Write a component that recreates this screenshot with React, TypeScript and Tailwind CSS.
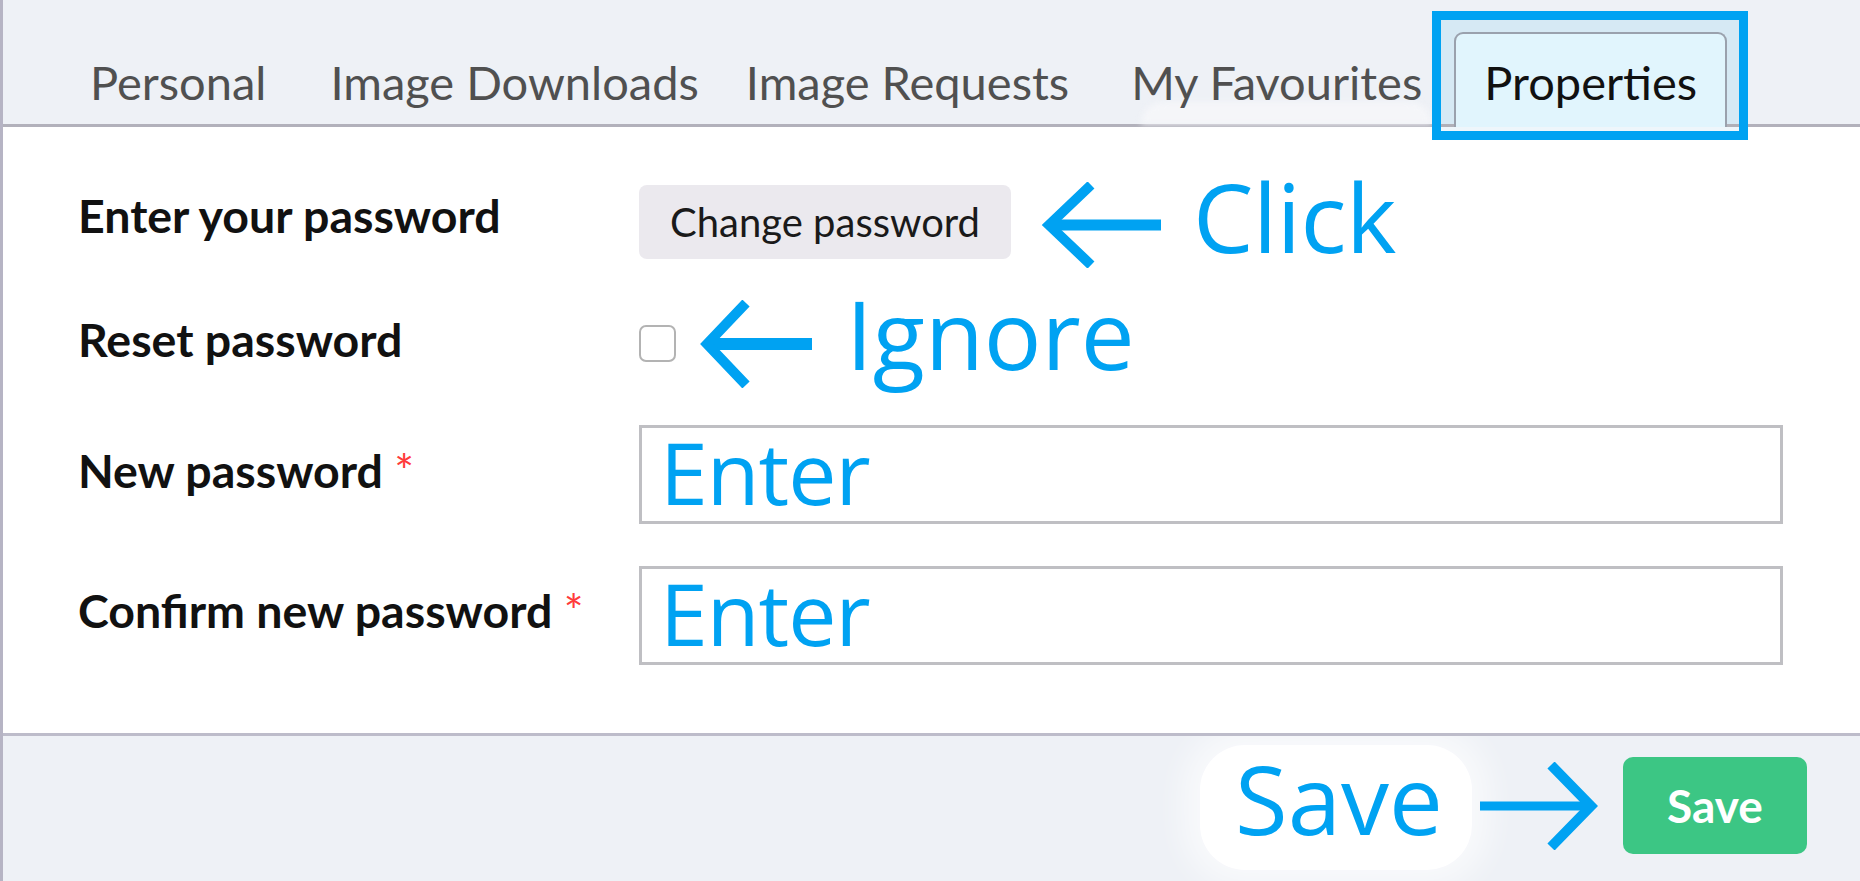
import React from "react";

const BLUE = "#00a2f2";

function ArrowLeft({ w, h, tipX, armX, shaft, arm }: { w: number; h: number; tipX: number; armX: number; shaft: number; arm: number }) {
  const cy = h / 2;
  return (
    <svg width={w} height={h} viewBox={`0 0 ${w} ${h}`} className="shrink-0 block">
      <line x1={tipX} y1={cy} x2={w} y2={cy} stroke={BLUE} strokeWidth={shaft} />
      <polyline points={`${armX},3 ${tipX},${cy} ${armX},${h - 3}`} fill="none" stroke={BLUE} strokeWidth={arm} strokeLinejoin="miter" />
    </svg>
  );
}

function ArrowRight({ w, h, tipX, armX, shaft, arm }: { w: number; h: number; tipX: number; armX: number; shaft: number; arm: number }) {
  const cy = h / 2;
  return (
    <svg width={w} height={h} viewBox={`0 0 ${w} ${h}`} className="shrink-0 block">
      <line x1={0} y1={cy} x2={tipX} y2={cy} stroke={BLUE} strokeWidth={shaft} />
      <polyline points={`${armX},3 ${tipX},${cy} ${armX},${h - 3}`} fill="none" stroke={BLUE} strokeWidth={arm} strokeLinejoin="miter" />
    </svg>
  );
}

export default function App() {
  return (
    <div className="w-full h-[881px] overflow-hidden border-l-[3px] border-[#b6b4c4] bg-[#eef1f6] font-['Lato',sans-serif] flex flex-col">
      {/* Tab bar */}
      <div className="h-[127px] shrink-0 border-b-[3px] border-[#b2b1bb] flex items-end pl-[55px]">
        <div className="h-[92px] px-[30px] pt-[20px] border-2 border-b-0 border-transparent text-[47px] leading-[56px] text-[#505050] whitespace-nowrap">
          Personal
        </div>
        <div className="h-[92px] pl-[30px] pr-[13px] pt-[20px] border-2 border-b-0 border-transparent text-[47px] leading-[56px] text-[#505050] whitespace-nowrap">
          Image Downloads
        </div>
        <div className="h-[92px] pl-[30px] pr-[28px] pt-[20px] border-2 border-b-0 border-transparent text-[47px] leading-[56px] text-[#505050] whitespace-nowrap">
          Image Requests
        </div>
        <div className="relative h-[92px] pl-[30px] pr-[30px] pt-[20px] border-2 border-b-0 border-transparent text-[47px] leading-[56px] text-[#505050] whitespace-nowrap">
          <div className="absolute bottom-0 left-[40px] right-[20px] h-[22px] rounded-t-[120px] bg-[#f5f6f9] blur-[3px]" />
          <span className="relative">My Favourites</span>
        </div>
        <div className="relative h-[95px] -mb-[3px]">
          <div className="absolute -left-[22px] -right-[21px] -top-[21px] -bottom-[13px] border-[9px] border-[#00a2f2] bg-[linear-gradient(180deg,#d6e9f4_0px,#d6e9f4_104px,#b0b0b8_104px,#b0b0b8_107px,#eef6fb_107px)]" />
          <div className="relative h-full px-[28px] pt-[20px] border-2 border-b-0 border-[#9aa1ad] rounded-t-[9px] bg-[#e1f5fd] text-[47px] leading-[56px] text-[#111] whitespace-nowrap">
            Properties
          </div>
        </div>
      </div>

      {/* Content */}
      <div className="h-[606px] shrink-0 bg-white pl-[75px] pt-[58px] flex flex-col text-[#111]">
        {/* Row 1 */}
        <div className="flex items-start h-[74px]">
          <div className="w-[561px] shrink-0 mt-[3px] text-[46.5px] leading-[55px] font-bold whitespace-nowrap">Enter your password</div>
          <button className="h-[74px] px-[31px] rounded-[8px] bg-[#ebe9ee] text-[40px] leading-[74px] text-[#1a1a1a] whitespace-nowrap shrink-0">
            Change password
          </button>
          <div className="ml-[30px] -mt-[3px]">
            <ArrowLeft w={120} h={86} tipX={8} armX={50} shaft={11} arm={10} />
          </div>
          <div className="ml-[32px] -mt-[19px] font-['Open_Sans',sans-serif] text-[96px] leading-[100px] tracking-[-0.5px] text-[#00a2f2] whitespace-nowrap">
            Click
          </div>
        </div>

        {/* Row 2 */}
        <div className="flex items-start h-[55px] mt-[53px]">
          <div className="w-[561px] shrink-0 text-[46.5px] leading-[55px] font-bold whitespace-nowrap">Reset password</div>
          <div className="mt-[13px] w-[37px] h-[37px] shrink-0 rounded-[7px] border-2 border-[#b3b3b3] bg-white" />
          <div className="ml-[23px] -mt-[12px]">
            <ArrowLeft w={113} h={88} tipX={8} armX={47} shaft={12} arm={10} />
          </div>
          <div className="ml-[34px] -mt-[29px] font-['Open_Sans',sans-serif] text-[96px] leading-[100px] text-[#00a2f2] whitespace-nowrap">
            Ignore
          </div>
        </div>

        {/* Row 3 */}
        <div className="flex items-start h-[99px] mt-[58px]">
          <div className="w-[561px] shrink-0 mt-[18px] text-[46.5px] leading-[55px] font-bold whitespace-nowrap">
            New password <span className="font-normal text-[#ff3b3b]">*</span>
          </div>
          <div className="w-[1144px] h-[99px] shrink-0 border-[3px] border-[#bfbfc3] pl-[18px] font-['Open_Sans',sans-serif] text-[86px] leading-[87px] tracking-[-1px] text-[#00a2f2]">
            Enter
          </div>
        </div>

        {/* Row 4 */}
        <div className="flex items-start h-[99px] mt-[42px]">
          <div className="w-[561px] shrink-0 mt-[17px] text-[46.5px] leading-[55px] font-bold whitespace-nowrap">
            Confirm new password <span className="font-normal text-[#ff3b3b]">*</span>
          </div>
          <div className="w-[1144px] h-[99px] shrink-0 border-[3px] border-[#bfbfc3] pl-[18px] font-['Open_Sans',sans-serif] text-[86px] leading-[87px] tracking-[-1px] text-[#00a2f2]">
            Enter
          </div>
        </div>
      </div>

      {/* Footer */}
      <div className="h-[148px] shrink-0 overflow-hidden border-t-[3px] border-[#bdbcca] bg-[#eef1f6] flex justify-end items-start pt-[21px] pr-[53px]">
        <div className="-mt-[12px] w-[272px] h-[125px] shrink-0 rounded-[45px] bg-white shadow-[0_0_30px_18px_rgba(255,255,255,0.6)] pl-[35px] pt-[3px] font-['Open_Sans',sans-serif] text-[96px] leading-[100px] text-[#00a2f2] whitespace-nowrap">
          Save
        </div>
        <div className="ml-[8px] mt-[5px] relative">
          <ArrowRight w={119} h={88} tipX={111} armX={71} shaft={9} arm={10} />
        </div>
        <button className="ml-[24px] w-[184px] h-[97px] shrink-0 rounded-[10px] bg-[#3cc684] text-white font-bold text-[46px] leading-[97px] text-center">
          Save
        </button>
      </div>
    </div>
  );
}
